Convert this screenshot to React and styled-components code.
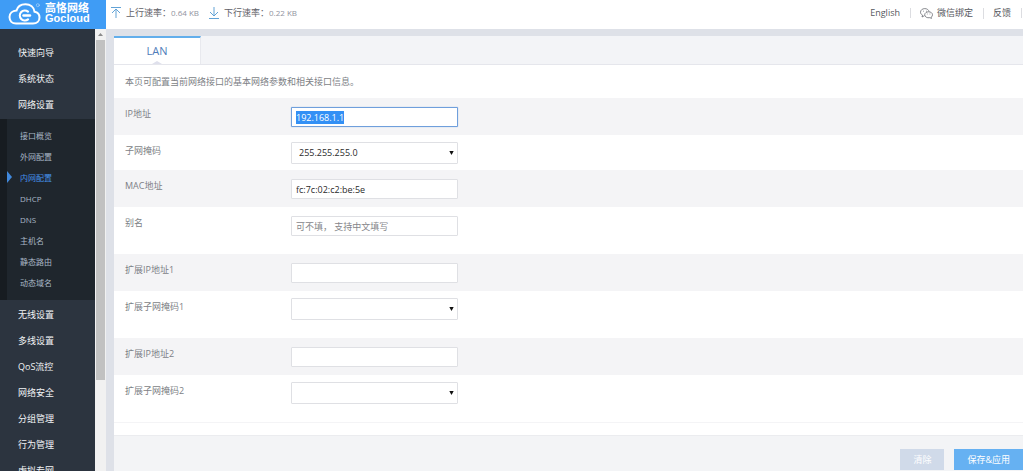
import React, { useEffect, useRef } from "react";
import styled, { createGlobalStyle } from "styled-components";

const GlobalStyle = createGlobalStyle`
  * { box-sizing: border-box; }
  body {
    margin: 0;
    overflow: hidden;
    background: #dee1e8;
    color: #7d7f86;
    font: 9px/12px "Open Sans", "Noto Sans CJK SC", sans-serif;
  }
  button, input, select { font: inherit; }
`;

const Shell = styled.div`
  display: flex;
  flex-direction: column;
  height: 100vh;
`;

const Header = styled.header`
  display: flex;
  flex: none;
  align-items: center;
  height: 29px;
  background: #fff;
  color: #55575d;
`;

const Brand = styled.a`
  display: flex;
  align-items: center;
  gap: 4px;
  width: 106px;
  height: 29px;
  padding: 0 0 3px 8px;
  background: #3f9cf5;
  color: #fff;
  text-decoration: none;
`;

const BrandName = styled.span`
  display: flex;
  flex-direction: column;
  font-weight: 700;
  font-size: 11px;
  line-height: 11px;
  white-space: nowrap;
`;

const BrandCjk = styled.span`
  font-family: "Noto Sans CJK SC", sans-serif;
`;

const BrandLatin = styled.span`
  font-family: "Liberation Sans", sans-serif;
`;

const Rates = styled.div`
  display: flex;
  flex: 1;
  gap: 10px;
  padding: 0 0 3px 5px;
`;

const Rate = styled.span`
  display: flex;
  align-items: center;
  color: #5f6167;
`;

const RateName = styled.span`
  padding-left: 5px;
`;

const RateValue = styled.span`
  color: #9193a0;
  font-size: 8px;
`;

const TopLinks = styled.nav`
  display: flex;
  align-items: center;
  padding: 0 1px 3px 0;
`;

const TopLink = styled.a`
  display: flex;
  align-items: center;
  gap: 4px;
  padding: 0 10px 0 9px;
  border-right: 1px solid #dcdde1;
  line-height: 10px;
  color: inherit;
  text-decoration: none;
`;

const Body = styled.div`
  display: flex;
  flex: 1;
  min-height: 0;
`;

const Sidebar = styled.nav`
  flex: none;
  width: 95px;
  padding-top: 11px;
  overflow: hidden;
  background: #2c343f;
`;

const Menu = styled.ul`
  margin: 0;
  padding: 0;
  list-style: none;
`;

const MenuLink = styled.a`
  display: block;
  padding-left: 18px;
  line-height: 26px;
  color: #f1f3f5;
  text-decoration: none;
  white-space: nowrap;
`;

const SubMenu = styled(Menu)`
  margin: 1px 0 2px;
  padding: 6px 0 7px;
  border-left: 7px solid #171c21;
  background: #1f262d;
`;

const SubLink = styled.a`
  position: relative;
  display: block;
  padding-left: 13px;
  font-size: 8px;
  line-height: 21px;
  color: ${(p) => (p.$active ? "#4592ea" : "#a9b7c6")};
  text-decoration: none;
`;

const ActiveMark = styled.span`
  position: absolute;
  top: 4px;
  left: 0;
  border: solid transparent;
  border-width: 6px 0 6px 5px;
  border-left-color: #4189dd;
`;

const ScrollTrack = styled.div`
  display: flex;
  flex: none;
  flex-direction: column;
  align-items: center;
  width: 11px;
  background: #f1f1f1;
`;

const ScrollArrow = styled.svg`
  flex: none;
  margin: 4px 0;
`;

const ScrollThumb = styled.div`
  width: 9px;
  height: 77%;
  background: #c1c1c1;
`;

const Main = styled.main`
  display: flex;
  flex: 1;
  flex-direction: column;
  min-width: 0;
  padding: 7px 0 0 8px;
`;

const TabBar = styled.div`
  display: flex;
  height: 29px;
  border-bottom: 1px solid #e5e6ec;
  background: #f3f4f7;
`;

const Tab = styled.button`
  position: relative;
  width: 87px;
  padding: 0;
  border: 0;
  border-top: 2px solid #62aeeb;
  border-right: 1px solid #e8e9ee;
  background: #fff;
  color: #4f7cba;
  font-size: 11px;
`;

const TabNotch = styled.span`
  position: absolute;
  bottom: 0;
  left: 50%;
  margin-left: -5px;
  border: solid transparent;
  border-width: 0 5px 3px;
  border-bottom-color: #dfe0ec;
`;

const Intro = styled.p`
  margin: 0;
  padding: 0 11px;
  background: #fff;
  line-height: 33px;
`;

const Form = styled.form`
  display: flex;
  flex: 1;
  flex-direction: column;
`;

const Row = styled.div`
  display: flex;
  align-items: flex-start;
  min-height: ${(p) => (p.$last ? 47 : p.$shaded ? 37 : 35)}px;
  padding: 7px 11px 0;
  background: ${(p) => (p.$shaded ? "#f4f4f6" : "#fff")};
`;

const Label = styled.label`
  width: 166px;
  line-height: 18px;
`;

const TextField = styled.input`
  width: 167px;
  height: 20px;
  margin-top: 2px;
  padding: 0 4px;
  border: 1px solid #dfe0e4;
  border-radius: 1px;
  outline: 0;
  background: #fff;
  color: #2b2b2b;

  &:focus { border-color: #6f9fdc; box-shadow: 0 0 1px #6f9fdc; }
  &::placeholder { color: #85868a; }
  &::selection { background: #3390f5; color: #fff; }
`;

const SelectBox = styled.span`
  position: relative;
  display: block;
  width: 167px;
`;

const SelectField = styled.select`
  display: block;
  width: 100%;
  height: 22px;
  padding: 0 7px;
  border: 1px solid #dfe0e4;
  border-radius: 1px;
  appearance: none;
  background: #fff;
  color: #2b2b2b;
`;

const SelectArrow = styled.svg`
  position: absolute;
  top: 9px;
  right: 4px;
  pointer-events: none;
`;

const PanelEnd = styled.div`
  height: 13px;
  border-top: 1px solid #f4f4f6;
  background: #fff;
`;

const Actions = styled.div`
  display: flex;
  flex: 1;
  align-items: flex-start;
  justify-content: flex-end;
  gap: 10px;
  padding-top: 13px;
  border-top: 1px solid #ebecef;
  background: #f3f4f6;
`;

const Action = styled.button`
  height: 21px;
  padding: 0 13px;
  border: 0;
  background: ${(p) => (p.$primary ? "#66b1f2" : "#d0dae9")};
  color: #fff;
`;

const before = ["快速向导", "系统状态", "网络设置"];
const network = ["接口概览", "外网配置", "内网配置", "DHCP", "DNS", "主机名", "静态路由", "动态域名"];
const after = ["无线设置", "多线设置", "QoS流控", "网络安全", "分组管理", "行为管理", "虚拟专网"];

const fields = [
  { id: "ip", label: "IP地址", value: "192.168.1.1", focus: true },
  { id: "mask", label: "子网掩码", options: ["255.255.255.0", "255.255.0.0"] },
  { id: "mac", label: "MAC地址", value: "fc:7c:02:c2:be:5e" },
  { id: "alias", label: "别名", hint: "可不填， 支持中文填写", last: true },
  { id: "ip1", label: "扩展IP地址1" },
  { id: "mask1", label: "扩展子网掩码1", options: ["", "255.255.255.0"], last: true },
  { id: "ip2", label: "扩展IP地址2" },
  { id: "mask2", label: "扩展子网掩码2", options: ["", "255.255.255.0"], last: true },
];

function CloudLogo() {
  return (
    <svg width="33" height="23" viewBox="0 0 33 23" fill="none" stroke="#fff" strokeWidth="2" strokeLinecap="round">
      <path d="M8 21.5H25C29 21.5 31.5 18.8 31.5 15.5C31.5 12.5 29.5 10.2 26.5 9.7C26 5.2 22.3 2.2 17.5 2.2C13 2.2 9.5 4.6 8.5 8.6C4.5 8.8 1.5 11.4 1.5 15C1.5 18.8 4.2 21.5 8 21.5Z" />
      <path d="M20 9.6A5 5 0 1 0 20 17.4" strokeWidth="2.2" />
      <path d="M15.5 13.5H22" strokeWidth="2.4" />
      <circle cx="29.8" cy="3.2" r="1.5" strokeWidth="0.6" opacity="0.6" />
    </svg>
  );
}

function RateIcon({ down }) {
  return (
    <svg width="10" height="12" viewBox="0 0 10 12" fill="none" stroke="#62a3d6">
      {down ? <path d="M5 0V9M1 5L5 9L9 5M0 11.5H10" /> : <path d="M0 .5H10M5 11V2M1 6L5 2L9 6" />}
    </svg>
  );
}

function WechatIcon() {
  return (
    <svg width="13" height="11" viewBox="0 0 13 11" fill="none" stroke="#6a6c72" strokeWidth="0.8">
      <path d="M4.5 7.7L2 9L2.5 7.1C1.2 6.4.5 5.4.5 4.2C.5 2.1 2.4.6 4.8.6C7 .6 8.7 1.8 9 3.6" />
      <path d="M8.6 3.8C10.8 3.8 12.5 5 12.5 6.8C12.5 7.8 12 8.6 11.2 9.1L11.5 10.4L9.9 9.7C7 10.2 4.7 8.8 4.7 6.8C4.7 5 6.5 3.8 8.6 3.8Z" />
      <path d="M3 3.2H3.8M6 3.2H6.8M6.9 6H7.6M9.6 6H10.3" />
    </svg>
  );
}

function Field({ field, shaded }) {
  const ref = useRef(null);
  useEffect(() => {
    if (field.focus) ref.current.select();
  }, [field.focus]);
  return (
    <Row $shaded={shaded} $last={field.last}>
      <Label htmlFor={field.id}>{field.label}</Label>
      {field.options ? (
        <SelectBox>
          <SelectField id={field.id}>
            {field.options.map((o) => <option key={o}>{o}</option>)}
          </SelectField>
          <SelectArrow width="5" height="4" viewBox="0 0 5 4"><path d="M.3 0H4.7L2.5 4Z" fill="#111" /></SelectArrow>
        </SelectBox>
      ) : (
        <TextField id={field.id} ref={ref} type="text" defaultValue={field.value} placeholder={field.hint} />
      )}
    </Row>
  );
}

const menuItems = (names) =>
  names.map((name) => <li key={name}><MenuLink href="#">{name}</MenuLink></li>);

export default function App() {
  return (
    <Shell>
      <GlobalStyle />
      <Header>
        <Brand href="#">
          <CloudLogo />
          <BrandName><BrandCjk>高恪网络</BrandCjk><BrandLatin>Gocloud</BrandLatin></BrandName>
        </Brand>
        <Rates>
          <Rate><RateIcon /><RateName>上行速率：</RateName><RateValue>0.64 KB</RateValue></Rate>
          <Rate><RateIcon down /><RateName>下行速率：</RateName><RateValue>0.22 KB</RateValue></Rate>
        </Rates>
        <TopLinks>
          <TopLink href="#">English</TopLink>
          <TopLink href="#"><WechatIcon />微信绑定</TopLink>
          <TopLink href="#">反馈</TopLink>
        </TopLinks>
      </Header>
      <Body>
        <Sidebar>
          <Menu>
            {menuItems(before)}
            <li>
              <SubMenu>
                {network.map((name) => {
                  const active = name === "内网配置";
                  return (
                    <li key={name}>
                      <SubLink href="#" $active={active}>{active && <ActiveMark />}{name}</SubLink>
                    </li>
                  );
                })}
              </SubMenu>
            </li>
            {menuItems(after)}
          </Menu>
        </Sidebar>
        <ScrollTrack>
          <ScrollArrow width="5" height="3" viewBox="0 0 5 3"><path d="M0 3L2.5 0L5 3Z" fill="#8b8b8b" /></ScrollArrow>
          <ScrollThumb />
        </ScrollTrack>
        <Main>
          <TabBar><Tab type="button">LAN<TabNotch /></Tab></TabBar>
          <Intro>本页可配置当前网络接口的基本网络参数和相关接口信息。</Intro>
          <Form>
            {fields.map((f, i) => <Field key={f.id} field={f} shaded={i % 2 === 0} />)}
            <PanelEnd />
            <Actions>
              <Action type="reset">清除</Action>
              <Action type="button" $primary>保存&amp;应用</Action>
            </Actions>
          </Form>
        </Main>
      </Body>
    </Shell>
  );
}
